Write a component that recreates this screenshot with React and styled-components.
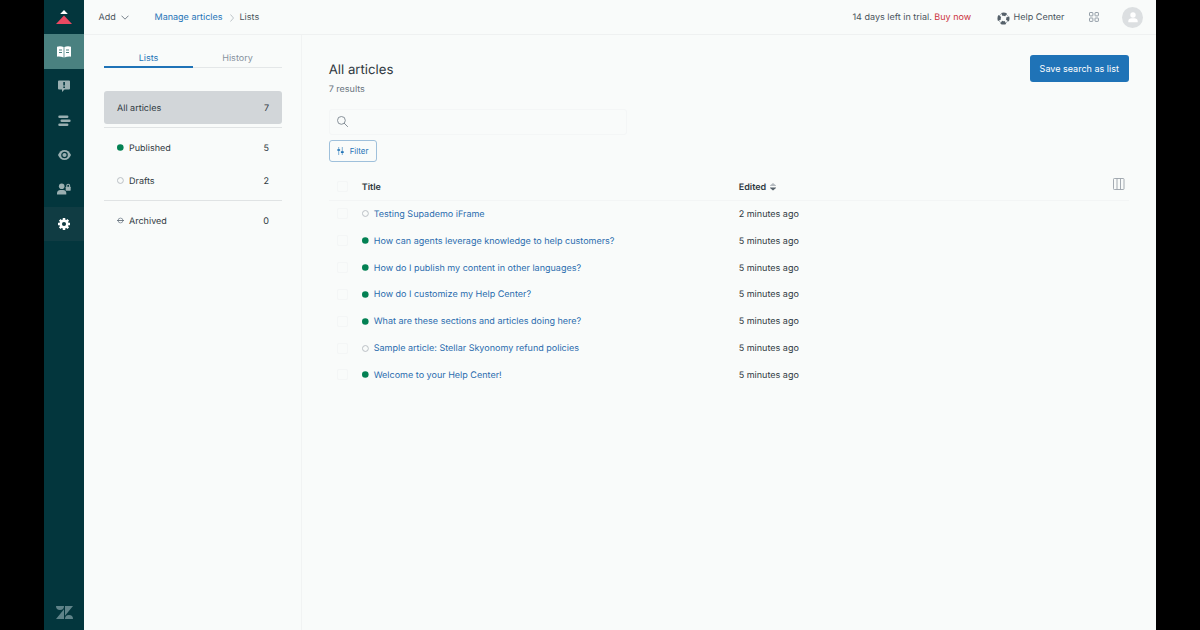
import styled, { createGlobalStyle } from 'styled-components';

const teal = '#03363d';
const blue = '#1f73b7';
const linkBlue = '#2a6cae';
const green = '#038153';
const text = '#2f3941';
const grey = '#68737d';

const lists = [
  { title: 'Published', count: 5, status: 'published' },
  { title: 'Drafts', count: 2, status: 'draft' },
];

const articles = [
  { title: 'Testing Supademo iFrame', edited: '2 minutes ago', status: 'draft' },
  { title: 'How can agents leverage knowledge to help customers?', edited: '5 minutes ago', status: 'published' },
  { title: 'How do I publish my content in other languages?', edited: '5 minutes ago', status: 'published' },
  { title: 'How do I customize my Help Center?', edited: '5 minutes ago', status: 'published' },
  { title: 'What are these sections and articles doing here?', edited: '5 minutes ago', status: 'published' },
  { title: 'Sample article: Stellar Skyonomy refund policies', edited: '5 minutes ago', status: 'draft' },
  { title: 'Welcome to your Help Center!', edited: '5 minutes ago', status: 'published' },
];

const LogoIcon = () => (
  <svg width="16" height="15" viewBox="0 0 16 15">
    <path fill="#fff" d="M8 0l3.800 4H4.200z" />
    <path fill="#eb4962" d="M8 5.500l8 8.500H0z" />
  </svg>
);

const BookIcon = () => (
  <svg width="14" height="12" viewBox="0 0 14 12">
    <path fill="#fff" d="M0 .7C2 0 4.800 0 6.600 1.100v10.500C4.700 10.700 2 10.400 0 10.700zM7.400 1.100C9.200 0 12 0 14 .7v10c-2-.3-4.700 0-6.600.9z" />
    <path stroke="#4a8180" strokeWidth="1" d="M2 4h3M2 6.500h3M9 4h3M9 6.500h3" />
  </svg>
);

const AlertIcon = () => (
  <svg width="12" height="12" viewBox="0 0 12 12">
    <path fill="#9aafb1" d="M1 .5h10a1 1 0 0 1 1 1v7a1 1 0 0 1-1 1H6.500L4 12V9.500H1a1 1 0 0 1-1-1v-7a1 1 0 0 1 1-1z" />
    <path fill={teal} d="M5.300 2h1.600v3.500H5.300zM5.300 6.500h1.600V8H5.300z" />
  </svg>
);

const BarsIcon = () => (
  <svg width="13" height="12" viewBox="0 0 13 12" stroke="#9aafb1" strokeWidth="2.500" strokeLinecap="round">
    <path d="M1.500 1.800h7.700M3.700 5.800h7.700M1.500 9.800h7.700" />
  </svg>
);

const EyeIcon = () => (
  <svg width="13" height="10" viewBox="0 0 13 10">
    <path fill="#9aafb1" d="M6.500 0C3.600 0 1.300 1.900 0 5c1.300 3.100 3.600 5 6.500 5s5.200-1.900 6.500-5C11.700 1.900 9.400 0 6.500 0z" />
    <circle cx="6.500" cy="5" r="2.700" fill="#9aafb1" stroke={teal} strokeWidth="1.200" />
  </svg>
);

const UserLockIcon = () => (
  <svg width="14" height="12" viewBox="0 0 14 12" fill="#9aafb1">
    <circle cx="4.700" cy="3.300" r="2.800" />
    <path d="M0 11.500V10c0-2 1.700-3 3.200-3h3C7.800 7 9.300 8 9.300 10v1.500z" />
    <rect x="8.700" y="3.700" width="5" height="4" rx=".6" />
    <path fill="none" stroke="#9aafb1" strokeWidth="1.100" d="M9.800 4V2.600a1.400 1.400 0 0 1 2.800 0V4" />
  </svg>
);

const GearIcon = () => (
  <svg width="12" height="12" viewBox="0 0 12 12">
    <path stroke="#fff" strokeWidth="2.500" d="M6 0v12M0 6h12M1.760 1.760l8.480 8.480M10.240 1.760l-8.480 8.480" />
    <circle cx="6" cy="6" r="3.300" fill="#103c43" stroke="#fff" strokeWidth="2.500" />
  </svg>
);

const BrandIcon = () => (
  <svg width="17" height="13" viewBox="0 0 17 13" fill="#5f8389">
    <path d="M0 0h8a4 4 0 0 1-8 0zM8 3.300V13H0zM9 0h8L9 9.700zM9 13a4 4 0 0 1 8 0z" />
  </svg>
);

const BuoyIcon = () => (
  <svg width="13" height="13" viewBox="0 0 13 13" fill="none">
    <circle cx="6.500" cy="6.500" r="5" stroke="#a5adb4" strokeWidth=".9" />
    <circle cx="6.500" cy="6.500" r="4.400" stroke="#56616a" strokeWidth="3.300" strokeDasharray="4.450 2.462" strokeDashoffset="2.225" />
  </svg>
);

const AppsIcon = () => (
  <svg width="10" height="10" viewBox="0 0 10 10" fill="none" stroke="#87929d" strokeWidth=".9">
    <rect x=".5" y=".5" width="3.400" height="3.400" rx=".6" />
    <rect x="6" y=".5" width="3.400" height="3.400" rx=".6" />
    <rect x=".5" y="6" width="3.400" height="3.400" rx=".6" />
    <rect x="6" y="6" width="3.400" height="3.400" rx=".6" />
  </svg>
);

function Status({ type }) {
  return (
    <svg width="7" height="7" viewBox="0 0 7 7" fill="none">
      {type === 'published' ? <circle cx="3.300" cy="3.500" r="3.300" fill={green} /> : null}
      {type === 'draft' ? <circle cx="3.400" cy="3.500" r="2.950" stroke="#b4babf" strokeWidth=".9" /> : null}
      {type === 'archived' ? (
        <>
          <circle cx="3.500" cy="3.500" r="2.400" stroke="#87929d" strokeWidth=".9" />
          <path stroke="#68737d" strokeWidth=".9" d="M0 3.500h7" />
        </>
      ) : null}
    </svg>
  );
}

function App() {
  return (
    <Screen>
      <GlobalStyle />
      <Sidebar>
        <NavItem><LogoIcon /></NavItem>
        <NavItem $bg="#4a8180"><BookIcon /></NavItem>
        <NavItem><AlertIcon /></NavItem>
        <NavItem><BarsIcon /></NavItem>
        <NavItem><EyeIcon /></NavItem>
        <NavItem><UserLockIcon /></NavItem>
        <NavItem $bg="#103c43"><GearIcon /></NavItem>
        <Brand><BrandIcon /></Brand>
      </Sidebar>
      <Content>
        <Header>
          <AddMenu>
            Add
            <svg width="8" height="5" viewBox="0 0 8 5" fill="none" stroke="#68737d" strokeWidth=".9">
              <path d="M.5.700L4 4.200 7.500.700" />
            </svg>
          </AddMenu>
          <Crumb $link>Manage articles</Crumb>
          <CrumbArrow width="4" height="8" viewBox="0 0 4 8" fill="none" stroke="#b8bec3" strokeWidth=".9">
            <path d="M.5.500L3.500 4 .5 7.500" />
          </CrumbArrow>
          <Crumb>Lists</Crumb>
          <Trial>14 days left in trial. <BuyNow>Buy now</BuyNow></Trial>
          <Help><BuoyIcon /><span>Help Center</span></Help>
          <AppsIcon />
          <Avatar>
            <svg width="10" height="11" viewBox="0 0 10 11" fill="#fff">
              <circle cx="5" cy="3" r="2.700" />
              <path d="M.3 10.300V9C.3 7.300 2 6.300 3.500 6.300h3C8 6.300 9.700 7.300 9.700 9v1.300z" />
            </svg>
          </Avatar>
        </Header>
        <Body>
          <Panel>
            <Tabs>
              <Tab $active>Lists</Tab>
              <Tab>History</Tab>
            </Tabs>
            <AllArticles>
              <span>All articles</span>
              <span>7</span>
            </AllArticles>
            <Group>
              {lists.map((list) => (
                <ListItem key={list.title}>
                  <Status type={list.status} />
                  <ListName>{list.title}</ListName>
                  <span>{list.count}</span>
                </ListItem>
              ))}
            </Group>
            <Group>
              <ListItem>
                <Status type="archived" />
                <ListName>Archived</ListName>
                <span>0</span>
              </ListItem>
            </Group>
          </Panel>
          <Main>
            <TitleBar>
              <div>
                <Title>All articles</Title>
                <Results>7 results</Results>
              </div>
              <SaveBtn>Save search as list</SaveBtn>
            </TitleBar>
            <Search>
              <svg width="11" height="11" viewBox="0 0 11 11" fill="none" stroke="#7c868e" strokeWidth=".9">
                <circle cx="4.400" cy="4.400" r="3.900" />
                <path d="M7.200 7.200l3.400 3.400" strokeLinecap="round" />
              </svg>
            </Search>
            <FilterBtn>
              <svg width="7" height="8" viewBox="0 0 7 8" stroke={blue} fill={blue}>
                <path strokeWidth=".8" opacity=".7" d="M1.700 0v8M5.300 0v8" />
                <path stroke="none" d="M.3 2.200h2.800v1.600H.3zM3.900 4.300h2.800v1.600H3.900z" />
              </svg>
              Filter
            </FilterBtn>
            <Table>
              <HeadRow>
                <Checkbox />
                <HeadCell>Title</HeadCell>
                <HeadCell>
                  Edited
                  <svg width="6" height="8" viewBox="0 0 6 8">
                    <path fill="#b5bbc0" d="M3 0l3 2.600v.4H0v-.4z" />
                    <path fill="#56616a" d="M3 7.600L0 5v-.5h6V5z" />
                  </svg>
                </HeadCell>
                <Columns width="12" height="12" viewBox="0 0 12 12" fill="none" stroke="#9aa2a9" strokeWidth=".9">
                  <rect x=".5" y=".5" width="10.500" height="11" rx=".8" />
                  <path d="M4 .5v11M7.500 .5v11" />
                </Columns>
              </HeadRow>
              {articles.map((article) => (
                <Row key={article.title}>
                  <Checkbox />
                  <ArticleCell>
                    <Status type={article.status} />
                    <ArticleLink>{article.title}</ArticleLink>
                  </ArticleCell>
                  <Edited>{article.edited}</Edited>
                </Row>
              ))}
            </Table>
          </Main>
        </Body>
      </Content>
    </Screen>
  );
}

const GlobalStyle = createGlobalStyle`
  * {
    box-sizing: border-box;
  }
  body {
    margin: 0;
    background: #000;
    font-family: Inter, 'Liberation Sans', sans-serif;
    font-size: 9.030px;
    color: ${text};
    text-rendering: geometricPrecision;
  }
  svg {
    display: block;
    flex-shrink: 0;
  }
`;

const Screen = styled.div`
  width: 1200px;
  height: 630px;
  padding: 0 44px;
  display: flex;
  overflow: hidden;
  background: #000;
`;

const Sidebar = styled.nav`
  width: 40px;
  display: flex;
  flex-direction: column;
  background: ${teal};
`;

const NavItem = styled.div`
  height: 34.450px;
  flex-shrink: 0;
  display: flex;
  align-items: center;
  justify-content: center;
  background: ${(props) => props.$bg || 'transparent'};
`;

const Brand = styled.div`
  margin-top: auto;
  height: 36px;
  display: flex;
  align-items: center;
  justify-content: center;
`;

const Content = styled.div`
  flex: 1;
  display: flex;
  flex-direction: column;
  background: #f9fbfa;
`;

const Header = styled.header`
  height: 35px;
  padding: 0 13px 0 14.500px;
  display: flex;
  align-items: center;
  border-bottom: 1px solid #eff1f1;
  color: #49545c;
`;

const AddMenu = styled.div`
  width: 56px;
  display: flex;
  align-items: center;
  gap: 5px;
`;

const Crumb = styled.span`
  color: ${(props) => (props.$link ? blue : 'inherit')};
  white-space: nowrap;
`;

const CrumbArrow = styled.svg`
  margin: 2px 6px 0 7px;
`;

const Trial = styled.div`
  margin-left: auto;
  white-space: nowrap;
`;

const BuyNow = styled.span`
  color: #cc3340;
`;

const Help = styled.div`
  margin: 0 24.500px 0 26px;
  display: flex;
  align-items: center;
  gap: 3.500px;
  white-space: nowrap;

  svg {
    margin-top: 2px;
  }
`;

const Avatar = styled.div`
  width: 21px;
  height: 21px;
  margin-left: 23px;
  display: flex;
  align-items: center;
  justify-content: center;
  border-radius: 50%;
  background: #dcdfe1;
`;

const Body = styled.div`
  flex: 1;
  display: flex;
`;

const Panel = styled.aside`
  width: 218px;
  padding: 13px 19px 0 20px;
  border-right: 1px solid #f1f3f3;
`;

const Tabs = styled.div`
  height: 20px;
  display: flex;
  margin-bottom: 23px;
`;

const Tab = styled.div`
  flex: 1;
  padding-top: 5px;
  line-height: 12px;
  text-align: center;
  color: ${(props) => (props.$active ? blue : '#87929d')};
  box-shadow: ${(props) => (props.$active ? `inset 0 -2px ${blue}` : 'inset 0 -1px #e4e7e8')};
`;

const AllArticles = styled.div`
  height: 33px;
  padding: 1px 13px 0;
  margin-bottom: 3px;
  display: flex;
  align-items: center;
  justify-content: space-between;
  border-radius: 3px;
  background: #d2d6d9;
`;

const Group = styled.div`
  padding: 3px 13px 3px;
  border-top: 1px solid #e0e3e4;
`;

const ListItem = styled.div`
  height: 33px;
  display: flex;
  align-items: center;
  gap: 5px;

  span {
    padding-top: 1px;
  }
`;

const ListName = styled.span`
  flex: 1;
`;

const Main = styled.main`
  flex: 1;
  padding: 20px 27px 0 26.700px;
`;

const TitleBar = styled.div`
  height: 54px;
  display: flex;
  align-items: flex-start;
  justify-content: space-between;
`;

const Title = styled.h1`
  margin: 6px 0;
  font-size: 13.200px;
  line-height: 18px;
  font-weight: 400;
`;

const Results = styled.div`
  line-height: 10px;
  color: ${grey};
`;

const SaveBtn = styled.button`
  width: 99.500px;
  height: 27px;
  padding: 0;
  border: none;
  border-radius: 3px;
  background: ${blue};
  color: #fff;
  font: inherit;
  white-space: nowrap;
`;

const Search = styled.div`
  width: 298px;
  height: 26px;
  padding: 0 7px 2px;
  display: flex;
  align-items: center;
  border: 1px solid #f4f6f6;
  border-radius: 3px;
`;

const FilterBtn = styled.button`
  width: 48px;
  height: 22px;
  margin-top: 5px;
  padding: 0 0 0 7px;
  display: flex;
  align-items: center;
  gap: 6px;
  border: 1px solid #9fc0db;
  border-radius: 3px;
  background: transparent;
  color: ${blue};
  font: inherit;
  font-size: 7.900px;
`;

const Table = styled.div`
  margin-top: 11px;
`;

const Row = styled.div`
  height: 26.850px;
  display: grid;
  grid-template-columns: 33px 377px 1fr 16px;
  align-items: center;
`;

const HeadRow = styled(Row)`
  height: 27.500px;
  border-bottom: 1px solid #f3f5f5;
`;

const HeadCell = styled.div`
  padding-top: 2px;
  display: flex;
  align-items: center;
  gap: 4px;
  font-weight: 600;
`;

const Checkbox = styled.div`
  width: 11px;
  height: 11px;
  margin-left: 8px;
  border: 1px solid #f4f6f6;
  border-radius: 2px;
`;

const Columns = styled.svg`
  margin-bottom: 5px;
`;

const ArticleCell = styled.div`
  display: flex;
  align-items: center;
  gap: 5px;
`;

const ArticleLink = styled.a`
  padding-top: 1px;
  color: ${linkBlue};
  white-space: nowrap;
`;

const Edited = styled.span`
  padding-top: 1px;
`;

export default App;
